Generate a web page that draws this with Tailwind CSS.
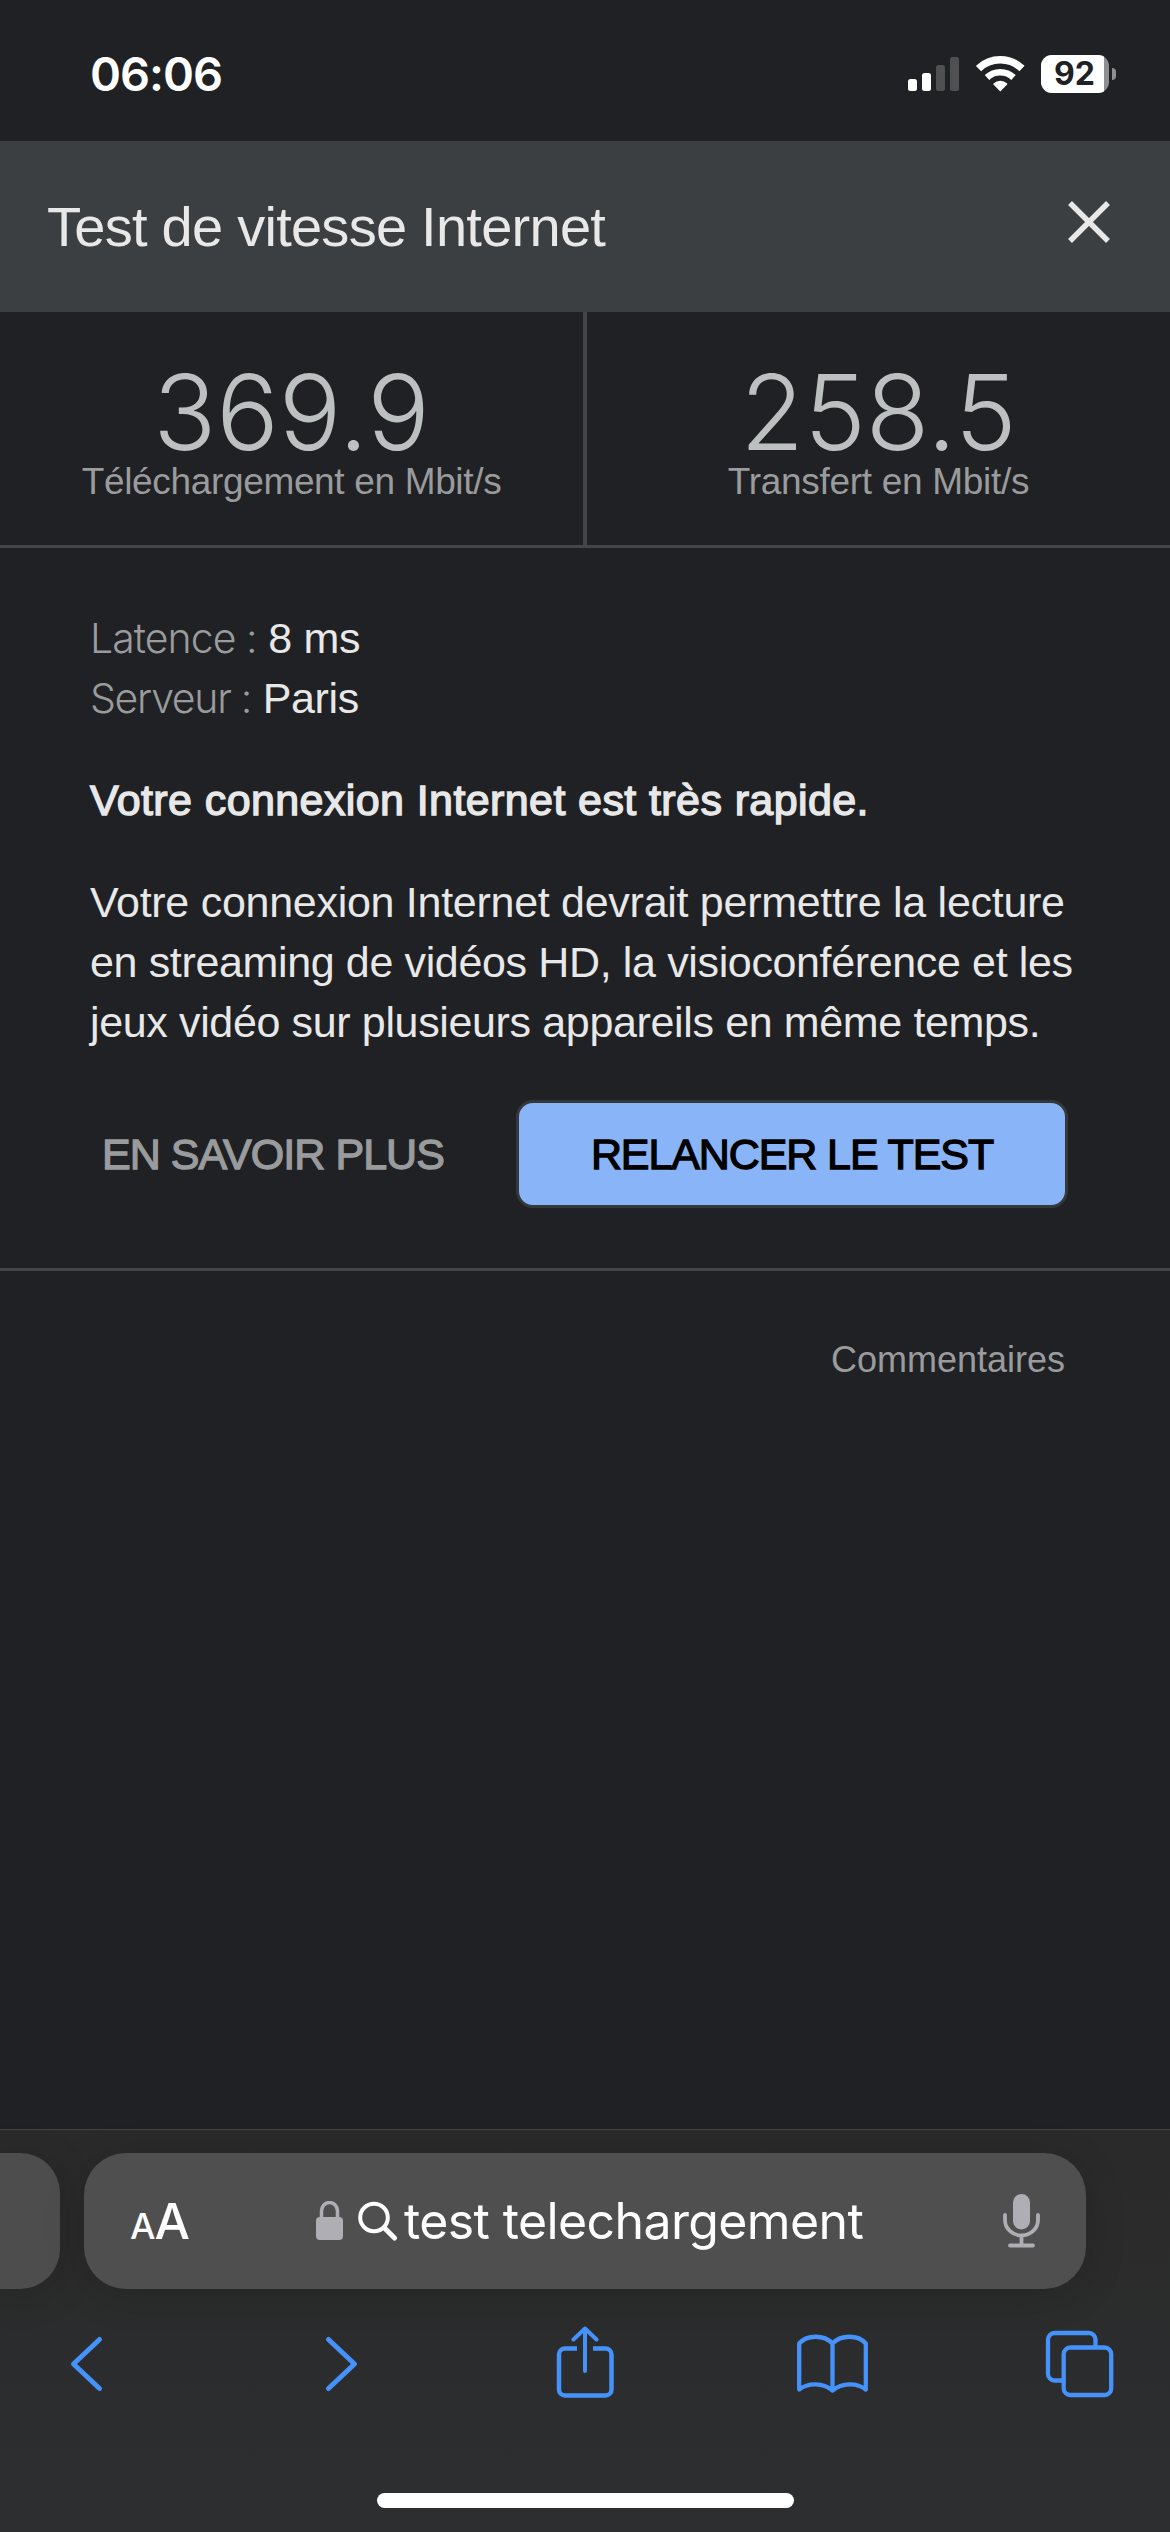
<!DOCTYPE html>
<html lang="fr">
<head>
  <meta charset="UTF-8">
  <title>Test de vitesse Internet</title>
  <script src="https://cdn.jsdelivr.net/npm/@tailwindcss/browser@4"></script>
</head>
<body class="bg-[#202124]">
<div class="flex h-[2532px] w-[1170px] flex-col overflow-hidden bg-[#202124] font-['Liberation_Sans',Arial,sans-serif] text-[#e8e8e8]">

  <!-- Status bar -->
  <div class="flex h-[141px] items-center pt-[7px] pl-[90px] pr-[54px] font-['Inter',sans-serif] text-white">
    <span class="whitespace-nowrap text-[47px] font-semibold tracking-[-1px]">06:06</span>
    <div class="ml-auto flex items-center">
      <svg class="h-[36px] w-[52px]" viewBox="0 0 52 36" fill="#fff">
        <rect x="0" y="23" width="9" height="12" rx="2.5"/>
        <rect x="14" y="17" width="9" height="18" rx="2.5"/>
        <rect x="28" y="9" width="9" height="26" rx="2.5" fill="#505053"/>
        <rect x="42" y="1" width="9" height="34" rx="2.5" fill="#505053"/>
      </svg>
      <svg class="ml-[16px] h-[38px] w-[49px]" viewBox="0 0 49 38" fill="none" stroke="#fff">
        <path d="M2.5 13.5A31.5 31.5 0 0 1 46 13.5" stroke-width="7.5"/>
        <path d="M11 22.500A19.500 19.500 0 0 1 37.500 22.500" stroke-width="6.5"/>
        <path d="M24.300 35.500L18 29A9 9 0 0 1 30.600 29Z" fill="#fff" stroke-width="1.500" stroke-linejoin="round"/>
      </svg>
      <div class="ml-[16px] flex h-[38px] w-[68px] items-center overflow-hidden rounded-[11px] bg-[#8f8f92]">
        <div class="flex h-full w-[63px] items-center justify-center bg-white pl-[4px]">
          <span class="text-[32px] font-bold leading-none text-[#202124]">92</span>
        </div>
      </div>
      <div class="ml-[3px] h-[12px] w-[4px] rounded-r-full bg-[#8f8f92]"></div>
    </div>
  </div>

  <!-- Card header -->
  <header class="flex h-[171px] items-center justify-between bg-[#3c3f42] pl-[47px] pr-[60px]">
    <h1 class="whitespace-nowrap text-[56px] tracking-[-0.74px]">Test de vitesse Internet</h1>
    <svg class="mb-[9px] h-[42px] w-[42px]" viewBox="0 0 42 42" stroke="#e8e8e8" stroke-width="5.500">
      <path d="M2 2L40 40M40 2L2 40"/>
    </svg>
  </header>

  <!-- Results -->
  <section class="grid h-[236px] grid-cols-[587px_1fr] border-b-3 border-[#444547] text-center">
    <div class="border-r-4 border-[#444547] pt-[52px]">
      <p class="font-['Inter',sans-serif] text-[104px] font-light leading-[96px] text-[#bdc0c0]">369.9</p>
      <p class="text-[37px] leading-[44px] tracking-[-0.34px] text-[#9a9b9c]">Téléchargement en Mbit/s</p>
    </div>
    <div class="pt-[52px]">
      <p class="font-['Inter',sans-serif] text-[104px] font-light leading-[96px] text-[#bdc0c0]">258.5</p>
      <p class="text-[37px] leading-[44px] tracking-[-0.3px] text-[#9a9b9c]">Transfert en Mbit/s</p>
    </div>
  </section>

  <!-- Details -->
  <section class="border-b-3 border-[#444547] pt-[60px] pb-[60px] text-[43px] leading-[60px] whitespace-nowrap">
    <div class="pl-[90px] tracking-[-0.36px]">
      <p><span class="font-['Inter',sans-serif] text-[41px] font-light tracking-[-0.95px] text-[#9a9b9c]">Latence :</span> 8 ms</p>
      <p><span class="font-['Inter',sans-serif] text-[41px] font-light tracking-[-1.3px] text-[#9a9b9c]">Serveur :</span> Paris</p>
      <p class="mt-[42px] tracking-[0.4px] [-webkit-text-stroke:1.4px_#e8e8e8]">Votre connexion Internet est très rapide.</p>
      <p class="mt-[42px]">
        <span class="tracking-[-0.28px]">Votre connexion Internet devrait permettre la lecture</span><br>
        en streaming de vidéos HD, la visioconférence et les<br>
        jeux vidéo sur plusieurs appareils en même temps.
      </p>
    </div>
    <div class="mt-[48px] flex h-[108px] items-center pl-[102px]">
      <a class="tracking-[-0.95px] text-[#9a9b9c] [-webkit-text-stroke:1.3px_#9a9b9c]">EN SAVOIR PLUS</a>
      <button class="ml-auto mr-[102px] h-[108px] w-[552px] rounded-[17px] border-3 border-[#35383b] bg-[#8ab4f8] tracking-[-1.1px] text-black [-webkit-text-stroke:1.3px_#000]">RELANCER LE TEST</button>
    </div>
  </section>

  <div class="flex-1 pt-[67px] pr-[105px] text-right text-[36px] leading-[44px] text-[#9a9b9c]">Commentaires</div>

  <!-- Browser chrome -->
  <footer class="h-[403px] border-t border-[#424345] bg-gradient-to-b from-[#2a2a2a] to-[#2d2e30] pt-[23px]">
    <div class="flex h-[136px] gap-[24px]">
      <div class="w-[60px] rounded-r-[40px] bg-[#4d4d4d] shadow-[0_6px_40px_rgba(0,0,0,0.15)]"></div>
      <div class="flex w-[1002px] items-center rounded-[42px] bg-[#4e4f4e] pl-[46px] pr-[46px] font-['Inter',sans-serif] text-white shadow-[0_6px_40px_rgba(0,0,0,0.15)]">
        <span class="w-[60px] whitespace-nowrap text-[50px] font-medium tracking-[-1px]"><span class="text-[36px]">A</span>A</span>
        <svg class="ml-[126px] h-[40px] w-[28px]" viewBox="0 0 28 40" fill="#aeaeb4">
          <rect x="0" y="16" width="27" height="23" rx="4"/>
          <path d="M5.500 18V10A8 8.500 0 0 1 21.500 10V18" fill="none" stroke="#aeaeb4" stroke-width="3.500"/>
        </svg>
        <svg class="ml-[14px] h-[40px] w-[40px]" viewBox="0 0 40 40" fill="none" stroke="#fff" stroke-linecap="round">
          <circle cx="16" cy="16.500" r="13.800" stroke-width="4"/>
          <path d="M26.500 27L36.500 37" stroke-width="5"/>
        </svg>
        <span class="ml-[6px] whitespace-nowrap text-[50px] tracking-[-0.62px]">test telechargement</span>
        <svg class="ml-auto mb-[1px] h-[54px] w-[37px]" viewBox="0 0 37 54" fill="none" stroke="#aeaeb4" stroke-width="3.800" stroke-linecap="round">
          <rect x="10" y="0" width="17" height="35.500" rx="8.500" fill="#aeaeb4" stroke="none"/>
          <path d="M2 21V26A16.500 15.500 0 0 0 35 26V21M18.500 42V51M7 51.500H30"/>
        </svg>
      </div>
    </div>

    <nav class="mt-[37px] flex h-[74px] pl-[69px]">
      <svg class="w-[35px]" viewBox="0 0 35 74" fill="none" stroke="#4592fa" stroke-width="5" stroke-linecap="round" stroke-linejoin="round">
        <path d="M30.500 13.500L4.500 38L30.500 62.500"/>
      </svg>
      <svg class="ml-[220px] w-[35px]" viewBox="0 0 35 74" fill="none" stroke="#4592fa" stroke-width="5" stroke-linecap="round" stroke-linejoin="round">
        <path d="M4.500 13.500L30.500 38L4.500 62.500"/>
      </svg>
      <svg class="ml-[196px] w-[60px]" viewBox="0 0 60 74" fill="none" stroke="#4592fa" stroke-width="4.500" stroke-linecap="round" stroke-linejoin="round">
        <path d="M22 22.500H10A6 6 0 0 0 4 28.500V63.500A6 6 0 0 0 10 69.500H50.500A6 6 0 0 0 56.500 63.500V28.500A6 6 0 0 0 50.500 22.500H38" stroke-linecap="butt"/>
        <path d="M30 45V3.500M18.500 13.500L30 2.500L41.500 13.500" stroke-width="4"/>
      </svg>
      <svg class="ml-[180px] w-[75px]" viewBox="0 0 75 74" fill="none" stroke="#4592fa" stroke-width="4.300" stroke-linejoin="round">
        <path d="M37.500 17.500C29 8.500 12 8.500 4.200 17.500V63.500C13 56.500 28 56.500 37.500 64.500C47 56.500 62 56.500 70.800 63.500V17.500C63 8.500 46 8.500 37.500 17.500ZM37.500 17.500V64.500"/>
      </svg>
      <svg class="ml-[174px] w-[72px]" viewBox="0 0 72 74" fill="none" stroke="#4592fa" stroke-width="4.300">
        <path d="M51.500 21V13.500A6.500 6.500 0 0 0 45 7H10.500A6.500 6.500 0 0 0 4 13.500V48A6.500 6.500 0 0 0 10.500 54.500H18"/>
        <rect x="19.700" y="21.500" width="47.500" height="47.500" rx="6.500"/>
      </svg>
    </nav>
    <div class="mx-auto mt-[93px] h-[15px] w-[417px] rounded-full bg-white"></div>
  </footer>
</div>
</body>
</html>
